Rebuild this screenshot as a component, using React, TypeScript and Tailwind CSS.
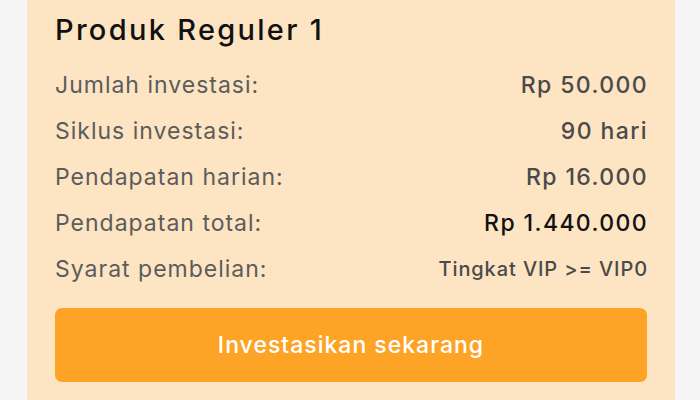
export default function App() {
  const rows = [
    { label: "Jumlah investasi:", value: "Rp 50.000", cls: "text-[23px] tracking-[1.4px] text-[#4a4a4a]" },
    { label: "Siklus investasi:", value: "90 hari", cls: "text-[23px] tracking-[1.4px] text-[#4a4a4a]" },
    { label: "Pendapatan harian:", value: "Rp 16.000", cls: "text-[23px] tracking-[1.4px] text-[#4a4a4a]" },
    { label: "Pendapatan total:", value: "Rp 1.440.000", cls: "text-[23px] tracking-[1.4px] text-[#111111]" },
    { label: "Syarat pembelian:", value: "Tingkat VIP >= VIP0", cls: "text-[20px] tracking-[0.9px] text-[#4a4a4a]" },
  ];
  return (
    <div
      className="h-[400px] w-full overflow-hidden bg-[#f5f5f5] pl-[27px] pr-[25px]"
      style={{ fontFamily: 'Inter, "Noto Sans", sans-serif' }}
    >
      <div className="h-full bg-[#fde4c2] px-[28px] pt-[10px]">
        <h2 className="h-[40px] text-[29px] font-medium leading-[40px] tracking-[2.3px] text-[#111111]">
          Produk Reguler 1
        </h2>
        <div className="mt-[12px] flex flex-col">
          {rows.map((r) => (
            <div key={r.label} className="flex h-[46px] items-center justify-between">
              <span className="text-[23px] tracking-[1px] text-[#5c5c5c]">{r.label}</span>
              <span className={`mr-[-1px] font-medium ${r.cls}`}>{r.value}</span>
            </div>
          ))}
        </div>
        <button className="mt-[16px] flex h-[74px] w-full items-center justify-center rounded-[7px] bg-[#fda427] text-[23px] font-medium tracking-[1px] text-white">
          Investasikan sekarang
        </button>
      </div>
    </div>
  );
}
